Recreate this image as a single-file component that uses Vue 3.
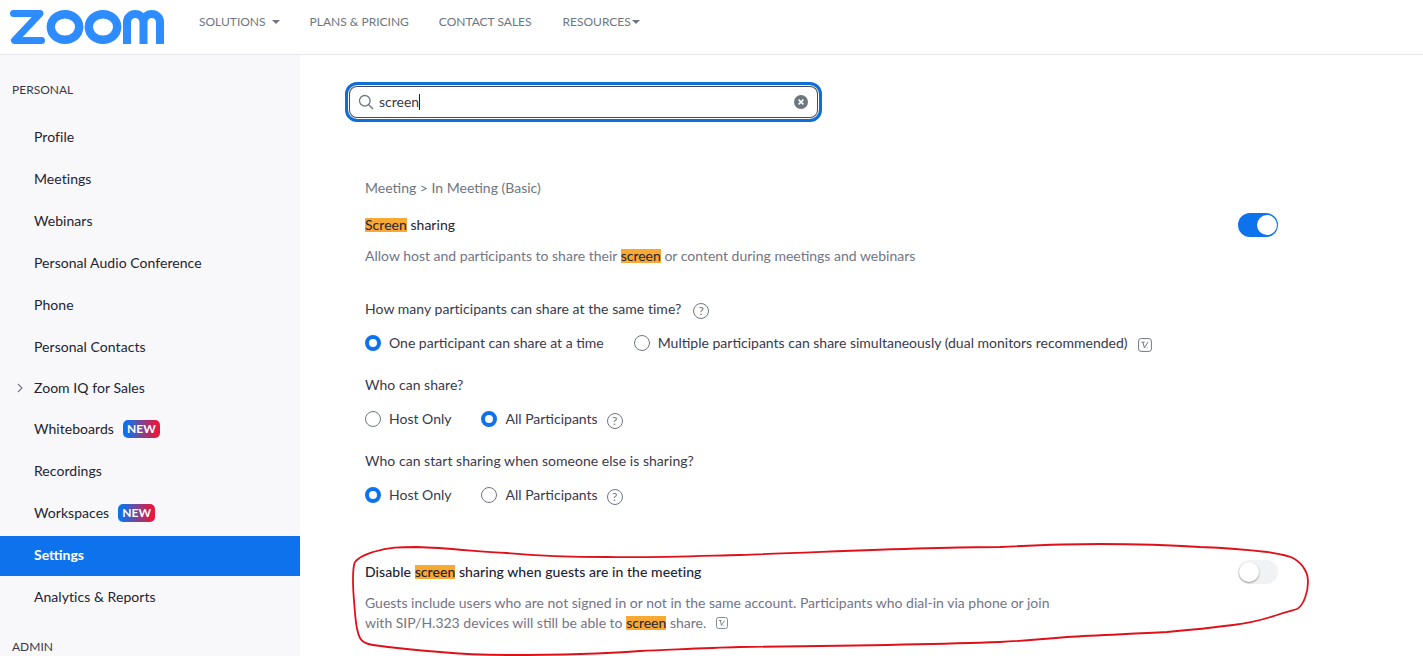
<script setup>
const items = [
  { label: 'Profile' },
  { label: 'Meetings' },
  { label: 'Webinars' },
  { label: 'Personal Audio Conference' },
  { label: 'Phone' },
  { label: 'Personal Contacts' },
  { label: 'Zoom IQ for Sales', chevron: true, tight: true },
  { label: 'Whiteboards', isNew: true, tight: true },
  { label: 'Recordings' },
  { label: 'Workspaces', isNew: true },
  { label: 'Settings', active: true },
  { label: 'Analytics & Reports' }
]
</script>

<template>
  <div class="page">
    <header class="topbar">
      <svg class="logo" viewBox="0 0 154 34" role="img" aria-label="Zoom logo">
        <g fill="none" stroke="#2d8cff">
          <path d="M3.5 3.5H30L4.5 30.5H31.5" stroke-width="7" stroke-linejoin="round" stroke-linecap="round" />
          <ellipse cx="55" cy="17" rx="14.2" ry="12.8" stroke-width="8.4" />
          <ellipse cx="93" cy="17" rx="14.2" ry="12.8" stroke-width="8.4" />
          <path d="M117 34V12a8.25 8 0 0 1 16.5 0V34M133.5 12a8.25 8 0 0 1 16.5 0V34" stroke-width="8" />
        </g>
      </svg>
      <nav class="nav">
        <span class="nav-item">SOLUTIONS <i class="caret"></i></span>
        <span class="nav-item">PLANS &amp; PRICING</span>
        <span class="nav-item">CONTACT SALES</span>
        <span class="nav-item res">RESOURCES<i class="caret tight"></i></span>
      </nav>
    </header>

    <div class="body">
      <aside class="sidebar">
        <div class="side-head">PERSONAL</div>
        <ul class="side-list">
          <li v-for="item in items" :key="item.label" class="side-item" :class="{ active: item.active, tight: item.tight }">
            <svg v-if="item.chevron" class="chev" viewBox="0 0 6 10"><path d="M1 1l4 4-4 4" /></svg>
            <span>{{ item.label }}</span>
            <span v-if="item.isNew" class="new">NEW</span>
          </li>
        </ul>
        <div class="side-admin">ADMIN</div>
      </aside>

      <main class="main">
        <div class="search">
          <svg class="search-icon" viewBox="0 0 16 16"><circle cx="6.8" cy="6.8" r="5.3" /><path d="M10.7 10.7l4.3 4.3" /></svg>
          <span class="search-text">screen</span><i class="cursor"></i>
          <svg class="clear" viewBox="0 0 14 14"><circle cx="7" cy="7" r="7" fill="#6e7680" /><path d="M4.6 4.6l4.8 4.8M9.4 4.6l-4.8 4.8" stroke="#fff" stroke-width="1.5" /></svg>
        </div>

        <section class="settings">
          <div class="crumb">Meeting &gt; In Meeting (Basic)</div>

          <div class="row-title first">
            <span class="title"><mark>Screen</mark> sharing</span>
            <span class="toggle on"><i></i></span>
          </div>
          <p class="desc one">Allow host and participants to share their <mark>screen</mark> or content during meetings and webinars</p>

          <div class="question q1">How many participants can share at the same time?<span class="help wide">?</span></div>
          <div class="radios">
            <span class="radio on"></span><span class="rlabel gap">One participant can share at a time</span>
            <span class="radio"></span><span class="rlabel">Multiple participants can share simultaneously (dual monitors recommended)</span>
            <svg class="ver" viewBox="0 0 14 14"><rect x=".6" y=".6" width="12.8" height="12.8" rx="2.5" /><path d="M3.4 4.2h3.2M5 4.2l1.4 5.8 3.4-5.8M8.8 10h.8" /></svg>
          </div>

          <div class="question q2">Who can share?</div>
          <div class="radios">
            <span class="radio"></span><span class="rlabel gap2">Host Only</span>
            <span class="radio on"></span><span class="rlabel">All Participants</span><span class="help">?</span>
          </div>

          <div class="question q2">Who can start sharing when someone else is sharing?</div>
          <div class="radios">
            <span class="radio on"></span><span class="rlabel gap2">Host Only</span>
            <span class="radio"></span><span class="rlabel">All Participants</span><span class="help">?</span>
          </div>

          <div class="row-title second">
            <span class="title"><b>Disable <mark>screen</mark> sharing when guests are in the meeting</b></span>
            <span class="toggle"><i></i></span>
          </div>
          <p class="desc two">Guests include users who are not signed in or not in the same account. Participants who dial-in via phone or join<br />with SIP/H.323 devices will still be able to <mark>screen</mark> share.<svg class="ver inline" viewBox="0 0 14 14"><rect x=".6" y=".6" width="12.8" height="12.8" rx="2.5" /><path d="M3.4 4.2h3.2M5 4.2l1.4 5.8 3.4-5.8M8.8 10h.8" /></svg></p>
        </section>
      </main>
    </div>

    <svg class="scribble" viewBox="0 0 1423 656" aria-hidden="true">
      <path d="M355 562C360 556 367 554 373 552C390 547 400 547 417 547C450 548 480 552 507 553C540 556 570 557 607 557C650 558 700 556 740 555C830 552 920 547 1000 547C1040 545 1070 544 1100 544C1140 544 1170 545 1200 547C1225 548 1250 550 1267 552C1280 554 1287 555 1293 558C1300 562 1303 566 1305 570C1308 575 1308 578 1308 582C1308 588 1307 593 1305 598C1303 603 1301 607 1297 609C1290 611 1285 612 1277 615C1262 620 1250 623 1233 625C1210 628 1190 630 1167 632C1130 634 1100 635 1067 637C1045 639 1020 641 1000 642C920 645 830 646 740 647C700 648 670 650 640 651C600 654 550 655 507 655C480 655 460 654 440 652C415 650 395 648 373 645C366 644 362 642 360 638C356 630 356 622 355 613C354 600 353 592 353 580C353 572 353 566 355 562Z" />
    </svg>
  </div>
</template>

<style>
html, body { margin: 0; overflow: hidden; background: #fff; }
</style>

<style scoped>
.page {
  position: relative;
  width: 1423px;
  height: 656px;
  overflow: hidden;
  background: #fff;
  font-family: Lato, "Open Sans", sans-serif;
  font-size: 14px;
  color: #232333;
}
.topbar {
  height: 54px;
  box-sizing: content-box;
  border-bottom: 1px solid #e6e6ea;
  display: flex;
  align-items: flex-start;
}
.logo { width: 154px; height: 34px; margin: 10px 0 0 10px; flex: none; }
.nav {
  display: flex;
  gap: 30px;
  margin: 14px 0 0 35px;
  font-size: 12px;
  line-height: 16px;
  color: #6e7680;
}
.nav-item { display: flex; align-items: center; white-space: pre; }
.nav-item.res { margin-left: 1px; }
.caret {
  display: inline-block;
  width: 0; height: 0;
  margin-left: 3px;
  border: 4px solid transparent;
  border-top-color: #6e7680;
  border-bottom: 0;
}
.caret.tight { margin-left: 1px; }
.body { display: flex; height: 601px; }
.sidebar {
  width: 300px;
  flex: none;
  background: #f8f8fa;
  position: relative;
}
.side-head {
  font-size: 12px;
  line-height: 16px;
  padding: 27px 0 0 12px;
  color: #39394d;
}
.side-list { list-style: none; margin: 18px 0 0; padding: 0; }
.side-item {
  position: relative;
  height: 42px;
  display: flex;
  align-items: center;
  padding-left: 34px;
  line-height: 18px;
  letter-spacing: .05px;
  color: #232333;
}
.side-item.tight { margin-top: -1px; }
.side-item.active {
  height: 40px;
  box-sizing: border-box;
  margin: 2px 0 0;
  padding-bottom: 2px;
  background: #0e72ed;
  color: #fff;
  font-weight: 700;
  letter-spacing: 0;
}
.chev {
  position: absolute;
  left: 17px;
  top: 16px;
  width: 6px;
  height: 10px;
  fill: none;
  stroke: #747487;
  stroke-width: 1.1;
}
.new {
  margin-left: 9px;
  width: 37px;
  height: 18px;
  border-radius: 5px;
  background: linear-gradient(90deg, #0e72ed 10%, #e8173d 90%);
  color: #fff;
  font-size: 12px;
  font-weight: 700;
  line-height: 18px;
  text-align: center;
  letter-spacing: 0;
}
.side-admin {
  font-size: 12px;
  line-height: 16px;
  padding: 21px 0 0 12px;
  color: #39394d;
}
.main { flex: 1; min-width: 0; padding: 27px 145px 0 45px; }
.search {
  width: 477px;
  height: 40px;
  box-sizing: border-box;
  border-radius: 12px;
  border: 3px solid #0e6fd6;
  box-shadow: inset 0 0 0 1px #fff, inset 0 0 0 2px #4a4a5c;
  display: flex;
  align-items: center;
  padding: 0 11px 0 10px;
}
.search-icon { width: 16px; height: 16px; fill: none; stroke: #6e7680; stroke-width: 1.3; flex: none; }
.search-text { margin-left: 5px; color: #39394d; line-height: 18px; }
.cursor { width: 1px; height: 16px; background: #232333; }
.clear { width: 14px; height: 14px; margin-left: auto; }
.settings { margin: 57px 0 0 20px; }
.crumb { line-height: 18px; color: #6e7680; }
.row-title { display: flex; justify-content: space-between; align-items: center; height: 24px; }
.row-title.first { margin-top: 16px; }
.row-title.second { margin-top: 55px; }
.title { line-height: 18px; color: #232333; letter-spacing: .03px; }
.title b { font-weight: 500; letter-spacing: .06px; }
mark {
  display: inline-block;
  background: #f7a934;
  color: #232333;
  line-height: 14px;
}
.desc { margin: 0; color: #747487; line-height: 20px; }
.desc.one { margin-top: 9px; }
.desc.two { margin-top: 9px; }
.question { line-height: 20px; display: flex; align-items: center; color: #39394d; letter-spacing: .04px; }
.q1 { margin-top: 33px; }
.q2 { margin-top: 22px; }
.help {
  width: 16px;
  height: 16px;
  box-sizing: border-box;
  margin-left: 10px;
  border: 1px solid #6e7680;
  border-radius: 50%;
  color: #6e7680;
  font-size: 12px;
  line-height: 14px;
  text-align: center;
  position: relative;
  top: 2px;
}
.help.wide { margin-left: 12px; }
.radios .help { margin-left: 9px; }
.radios {
  display: flex;
  align-items: center;
  height: 20px;
  margin-top: 14px;
  color: #39394d;
}
.radio {
  width: 16px;
  height: 16px;
  box-sizing: border-box;
  border: 1px solid #6e7680;
  border-radius: 50%;
  flex: none;
  background: #fff;
}
.radio.on { border: 4px solid #0e72ed; }
.rlabel { margin-left: 8px; line-height: 20px; }
.rlabel.gap { margin-right: 30px; }
.rlabel.gap2 { margin-right: 30px; }
.ver {
  width: 14px;
  height: 14px;
  margin-left: 10px;
  fill: none;
  stroke: #6e7680;
  stroke-width: 1;
  position: relative;
  top: 2px;
  flex: none;
}
.ver.inline { margin-left: 10px; width: 12px; height: 12px; display: inline-block; top: 1px; }
.toggle {
  width: 40px;
  height: 24px;
  border-radius: 12px;
  background: #f1f2f4;
  display: flex;
  align-items: center;
  padding: 0 1px;
  box-sizing: border-box;
}
.toggle i {
  width: 20px;
  height: 20px;
  border-radius: 50%;
  background: #fff;
  box-shadow: 0 1px 2px rgba(0,0,0,.4);
}
.toggle.on { background: #0e72ed; justify-content: flex-end; }
.toggle.on i { box-shadow: none; }
.scribble {
  position: absolute;
  inset: 0;
  width: 1423px;
  height: 656px;
  fill: none;
  stroke: #e0101a;
  stroke-width: 1.8;
  pointer-events: none;
}
</style>
